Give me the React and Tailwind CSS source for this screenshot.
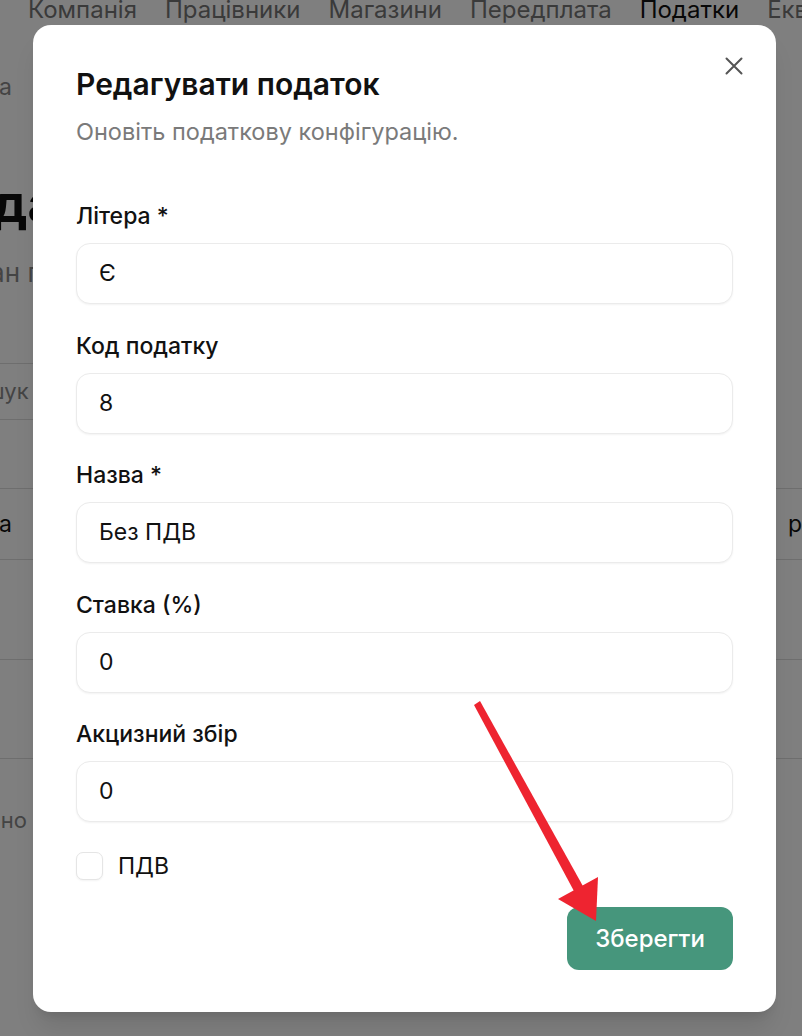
const fields = [
  { label: 'Літера *', value: 'Є' },
  { label: 'Код податку', value: '8' },
  { label: 'Назва *', value: 'Без ПДВ' },
  { label: 'Ставка (%)', value: '0' },
  { label: 'Акцизний збір', value: '0' },
];

function Backdrop() {
  return (
    <div className="h-[1036px] w-full text-[#111]">
      <div className="-mt-[6px] flex gap-[28px] whitespace-nowrap pl-[28px] text-[24px] leading-[32px] text-[#757575]">
        <span>Компанія</span>
        <span>Працівники</span>
        <span>Магазини</span>
        <span>Передплата</span>
        <span className="text-[#111]">Податки</span>
        <span>Еквайринг</span>
      </div>

      <div className="mt-[47px] flex w-[12px] justify-end whitespace-nowrap text-[23px] leading-[28px] text-[#888]">
        <span>Налаштування / Головна</span>
      </div>

      <div className="mt-[73px] -ml-[78px] whitespace-nowrap text-[52px] font-bold leading-[60px]">Податки</div>
      <div className="mt-[23px] -ml-[41px] whitespace-nowrap text-[26px] leading-[32px] text-[#888]">Стан податків та ставок</div>

      <div className="mt-[74px] -ml-[60px] flex h-[57px] w-[760px] items-center rounded-[12px] border border-[#ddd] pl-[16px] text-[22px] text-[#888]">
        Пошук за назвою
      </div>

      <div className="mt-[68px] border-y border-[#ddd]">
        <div className="flex h-[70px] items-center justify-between text-[23px]">
          <div className="flex w-[12px] justify-end whitespace-nowrap">
            <span>Літера</span>
          </div>
          <div className="w-[14px] overflow-hidden whitespace-nowrap">розрахунок</div>
        </div>
      </div>
      <div className="h-[100px] border-b border-[#ddd]" />
      <div className="h-[99px] border-b border-[#ddd]" />
      <div className="mt-[47px] flex w-[27px] justify-end whitespace-nowrap text-[22px] leading-[28px] text-[#888]">
        <span>Показано</span>
      </div>
    </div>
  );
}

function Field({ label, value }) {
  return (
    <div className="flex flex-col gap-[13px]">
      <label className="text-[23px] font-medium leading-[28px] text-[#111]">{label}</label>
      <div className="flex h-[61px] items-center rounded-[14px] border border-[#ebebeb] bg-white px-[22px] text-[23px] text-[#111] shadow-[0_1px_2px_rgba(0,0,0,0.05)]">
        {value}
      </div>
    </div>
  );
}

export default function App() {
  return (
    <div className="relative h-[1036px] w-full overflow-hidden bg-white font-['Inter',sans-serif]">
      <Backdrop />
      <div className="absolute inset-0 bg-black/50" />

      <div className="absolute left-[33px] top-[25px] flex h-[987px] w-[743px] flex-col rounded-[18px] bg-white px-[43px] pb-[42px] pt-[41px] shadow-xl">
        <button className="absolute right-[33px] top-[32px]">
          <svg width="18" height="18" viewBox="0 0 18 18" fill="none" stroke="#555" strokeWidth="2" strokeLinecap="round">
            <path d="M1.5 1.5L16.5 16.5M16.5 1.5L1.5 16.5" />
          </svg>
        </button>
        <h2 className="text-[30px] font-semibold leading-[36px] text-[#111]">Редагувати податок</h2>
        <p className="mt-[16px] text-[23.5px] leading-[28px] text-[#7a7a7a]">Оновіть податкову конфігурацію.</p>

        <div className="mt-[56px] flex flex-col gap-[27.5px]">
          {fields.map((f) => (
            <Field key={f.label} label={f.label} value={f.value} />
          ))}
        </div>

        <label className="mt-[30px] flex items-center gap-[15px]">
          <span className="h-[28px] w-[27px] rounded-[7px] border border-[#e5e5e5] bg-white shadow-[0_1px_2px_rgba(0,0,0,0.05)]" />
          <span className="text-[23px] leading-[28px] text-[#111]">ПДВ</span>
        </label>

        <div className="mt-[27px] flex justify-end">
          <button className="h-[63px] w-[166px] rounded-[12px] bg-[#46967c] text-[24px] font-medium text-white">
            Зберегти
          </button>
        </div>
      </div>

      <svg className="pointer-events-none absolute inset-0" width="802" height="1036" viewBox="0 0 802 1036">
        <polygon points="474,705 480,701 584,888 575,893" fill="#ee2430" />
        <polygon points="596,921 558,899 598,877" fill="#ee2430" />
      </svg>
    </div>
  );
}
